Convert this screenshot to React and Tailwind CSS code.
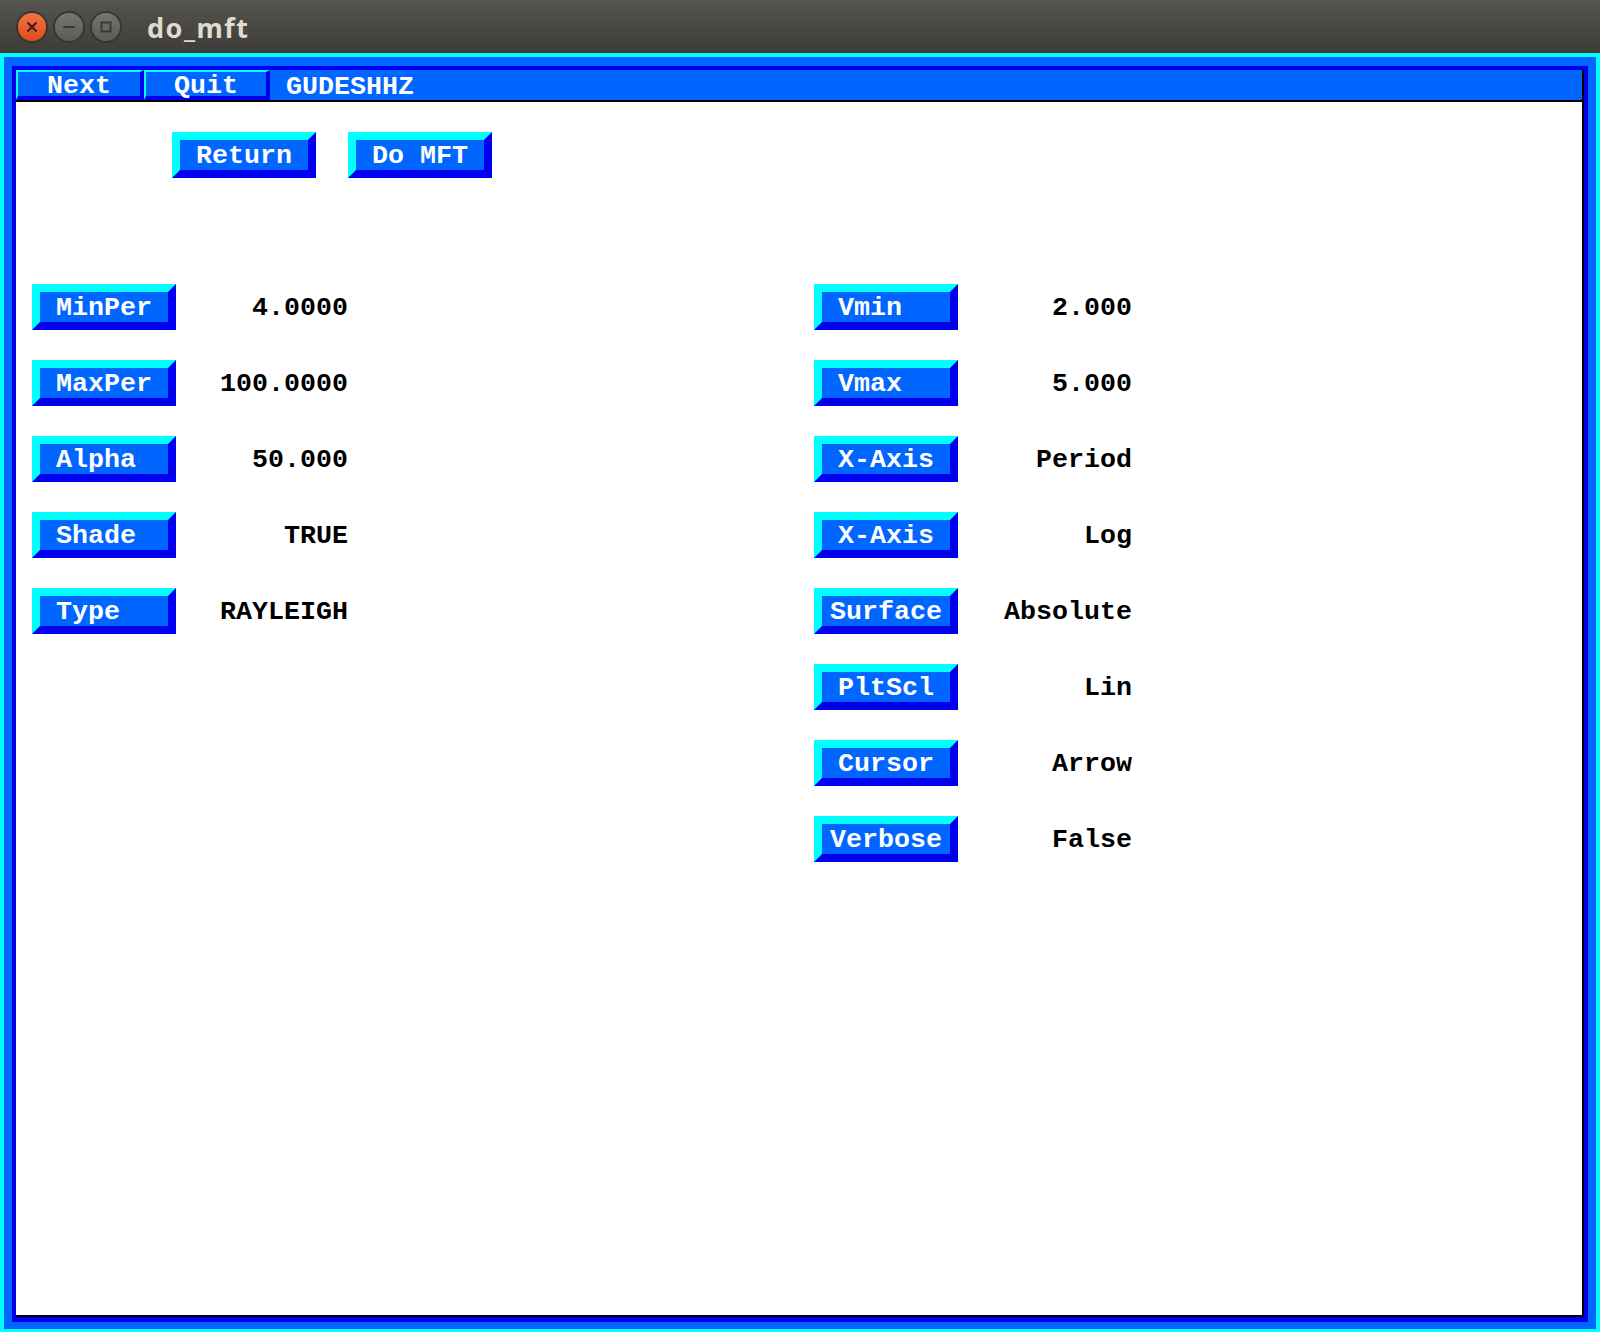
import React from "react";

const mono = "font-['Liberation_Mono','DejaVu_Sans_Mono',monospace] font-bold text-[26.67px] leading-none";
const bevel =
  "border-8 border-t-[#00ffff] border-l-[#00ffff] border-b-[#0000ee] border-r-[#0000ee] bg-[#0066ff]";

const leftRows = [
  ["MinPer", "4.0000"],
  ["MaxPer", "100.0000"],
  ["Alpha", "50.000"],
  ["Shade", "TRUE"],
  ["Type", "RAYLEIGH"],
];

const rightRows = [
  ["Vmin", "2.000"],
  ["Vmax", "5.000"],
  ["X-Axis", "Period"],
  ["X-Axis", "Log"],
  ["Surface", "Absolute"],
  ["PltScl", "Lin"],
  ["Cursor", "Arrow"],
  ["Verbose", "False"],
];

const Button = ({ label }) => (
  <div
    className={`${bevel} w-[144px] h-[46px] flex items-center justify-center text-white whitespace-pre pt-[3px]`}
  >
    {label.padEnd(6)}
  </div>
);

const MenuButton = ({ label, width }) => (
  <div
    className={`${width} h-full flex items-center justify-center text-white pt-[4px] border-t-2 border-l-2 border-r-4 border-b-4 border-t-[#00ffff] border-l-[#00ffff] border-r-[#0000ee] border-b-[#0000ee] bg-[#0066ff]`}
  >
    {label}
  </div>
);

const Field = ({ label, value, valueWidth }) => (
  <div className="flex items-center h-[46px]">
    <Button label={label} />
    <div className={`${valueWidth} text-right text-black pt-[3px]`}>{value}</div>
  </div>
);

const TitleBar = () => (
  <div className="h-[53px] flex items-center bg-gradient-to-b from-[#56544e] to-[#3d3c38] shrink-0">
    <div className="flex items-center gap-[9px] pl-[18px]">
      <div className="w-[28px] h-[28px] rounded-full bg-gradient-to-b from-[#f4733f] to-[#dd4a1c] ring-2 ring-[#36352f] flex items-center justify-center">
        <svg width="12" height="12" viewBox="0 0 12 12">
          <path d="M2 2 L10 10 M10 2 L2 10" stroke="#3a1d12" strokeWidth="2" strokeLinecap="round" />
        </svg>
      </div>
      <div className="w-[28px] h-[28px] rounded-full bg-gradient-to-b from-[#76756f] to-[#5c5b56] ring-2 ring-[#36352f] flex items-center justify-center">
        <svg width="14" height="12" viewBox="0 0 14 12">
          <path d="M2 6 L12 6" stroke="#3b3a36" strokeWidth="2" strokeLinecap="round" />
        </svg>
      </div>
      <div className="w-[28px] h-[28px] rounded-full bg-gradient-to-b from-[#76756f] to-[#5c5b56] ring-2 ring-[#36352f] flex items-center justify-center">
        <svg width="14" height="14" viewBox="0 0 14 14">
          <rect x="2.5" y="2.5" width="9" height="9" fill="none" stroke="#3b3a36" strokeWidth="2" />
        </svg>
      </div>
    </div>
    <span className="ml-[27px] font-['Noto_Sans',sans-serif] font-bold text-[27px] tracking-[1.5px] text-[#dfdbd2] leading-none pt-[2px]">
      do_mft
    </span>
  </div>
);

export default function App() {
  return (
    <div className={`w-[1600px] h-[1332px] flex flex-col overflow-hidden ${mono}`}>
      <TitleBar />
      <div className="flex-1 flex flex-col bg-[#00ffff] pt-[4px] px-[4px] pb-[3px]">
        <div className="flex-1 flex flex-col bg-[#0066ff] pt-[9px] px-[8px] pb-[7px]">
          <div className="flex-1 flex flex-col bg-[#0000ee] pt-[4px] px-[4px] pb-[5px]">
            <div className="flex-1 flex flex-col border-r-2 border-b-2 border-black">
              <nav className="h-[32px] flex items-stretch bg-[#0066ff] border-b-2 border-black shrink-0">
                <MenuButton label="Next" width="w-[128px]" />
                <MenuButton label="Quit" width="w-[126px]" />
                <div className="flex items-center pl-[16px] pt-[4px] text-white">GUDESHHZ</div>
              </nav>
              <main className="flex-1 bg-white">
                <div className="flex gap-[32px] pl-[156px] pt-[30px]">
                  <Button label="Return" />
                  <Button label="Do MFT" />
                </div>
                <div className="flex pl-[16px] mt-[106px]">
                  <div className="w-[782px] flex flex-col gap-[30px]">
                    {leftRows.map(([label, value]) => (
                      <Field key={label} label={label} value={value} valueWidth="w-[172px]" />
                    ))}
                  </div>
                  <div className="flex flex-col gap-[30px]">
                    {rightRows.map(([label, value], i) => (
                      <Field key={i} label={label} value={value} valueWidth="w-[174px]" />
                    ))}
                  </div>
                </div>
              </main>
            </div>
          </div>
        </div>
      </div>
    </div>
  );
}
